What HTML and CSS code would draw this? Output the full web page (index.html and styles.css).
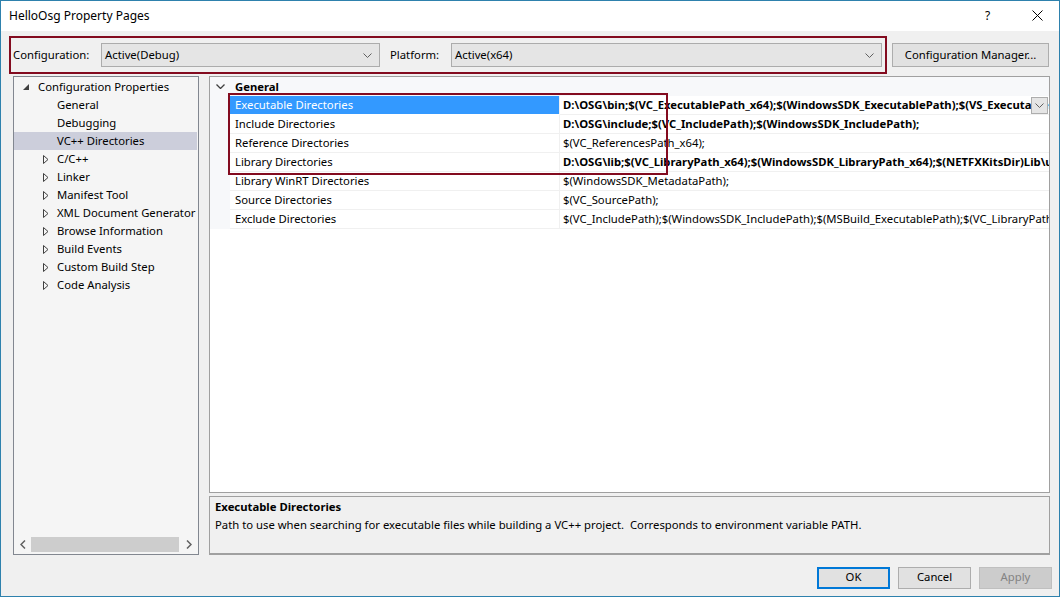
FILE: index.html
```html
<!DOCTYPE html>
<html>
<head>
<meta charset="utf-8">
<link rel="stylesheet" href="styles.css">
</head>
<body>
<div class="window">
  <div class="titlebar">
    <span class="title">HelloOsg Property Pages</span>
    <span class="tb-help">?</span>
    <span class="tb-close"><svg width="11" height="11" viewBox="0 0 11 11"><path d="M0.5 0.5 L10.5 10.5 M10.5 0.5 L0.5 10.5" stroke="#000" stroke-width="1" fill="none"/></svg></span>
  </div>

  <div class="toolbar">
    <div class="config-box">
      <span class="lbl lbl-config">Configuration:</span>
      <div class="combo combo-config"><span class="combo-text">Active(Debug)</span><svg class="chev" width="9" height="5" viewBox="0 0 9 5"><path d="M0.5 0.5 L4.5 4.5 L8.5 0.5" stroke="#606060" fill="none"/></svg></div>
      <span class="lbl lbl-platform">Platform:</span>
      <div class="combo combo-platform"><span class="combo-text">Active(x64)</span><svg class="chev" width="9" height="5" viewBox="0 0 9 5"><path d="M0.5 0.5 L4.5 4.5 L8.5 0.5" stroke="#606060" fill="none"/></svg></div>
    </div>
    <div class="btn btn-cfgmgr">Configuration Manager...</div>
  </div>

  <div class="main">
    <div class="tree">
      <div class="tree-list">
        <div class="tnode root"><svg class="exp" width="7" height="7" viewBox="0 0 7 7"><path d="M6 0 L6 6 L0 6 Z" fill="#404040"/></svg><span>Configuration Properties</span></div>
        <div class="tnode child"><span>General</span></div>
        <div class="tnode child"><span>Debugging</span></div>
        <div class="tnode child selected"><span>VC++ Directories</span></div>
        <div class="tnode child"><svg class="col" width="6" height="9" viewBox="0 0 6 9"><path d="M0.5 0.5 L5 4.5 L0.5 8.5 Z" fill="none" stroke="#404040"/></svg><span>C/C++</span></div>
        <div class="tnode child"><svg class="col" width="6" height="9" viewBox="0 0 6 9"><path d="M0.5 0.5 L5 4.5 L0.5 8.5 Z" fill="none" stroke="#404040"/></svg><span>Linker</span></div>
        <div class="tnode child"><svg class="col" width="6" height="9" viewBox="0 0 6 9"><path d="M0.5 0.5 L5 4.5 L0.5 8.5 Z" fill="none" stroke="#404040"/></svg><span>Manifest Tool</span></div>
        <div class="tnode child"><svg class="col" width="6" height="9" viewBox="0 0 6 9"><path d="M0.5 0.5 L5 4.5 L0.5 8.5 Z" fill="none" stroke="#404040"/></svg><span>XML Document Generator</span></div>
        <div class="tnode child"><svg class="col" width="6" height="9" viewBox="0 0 6 9"><path d="M0.5 0.5 L5 4.5 L0.5 8.5 Z" fill="none" stroke="#404040"/></svg><span>Browse Information</span></div>
        <div class="tnode child"><svg class="col" width="6" height="9" viewBox="0 0 6 9"><path d="M0.5 0.5 L5 4.5 L0.5 8.5 Z" fill="none" stroke="#404040"/></svg><span>Build Events</span></div>
        <div class="tnode child"><svg class="col" width="6" height="9" viewBox="0 0 6 9"><path d="M0.5 0.5 L5 4.5 L0.5 8.5 Z" fill="none" stroke="#404040"/></svg><span>Custom Build Step</span></div>
        <div class="tnode child"><svg class="col" width="6" height="9" viewBox="0 0 6 9"><path d="M0.5 0.5 L5 4.5 L0.5 8.5 Z" fill="none" stroke="#404040"/></svg><span>Code Analysis</span></div>
      </div>
      <div class="hscroll">
        <span class="sarrow"><svg width="6" height="9" viewBox="0 0 6 9"><path d="M5 0.5 L1 4.5 L5 8.5" stroke="#606060" stroke-width="1.5" fill="none"/></svg></span>
        <span class="thumb"></span>
        <span class="sarrow sarrow-r"><svg width="6" height="9" viewBox="0 0 6 9"><path d="M1 0.5 L5 4.5 L1 8.5" stroke="#606060" stroke-width="1.5" fill="none"/></svg></span>
      </div>
    </div>

    <div class="right">
      <div class="grid">
        <div class="grid-head">
          <svg class="head-chev" width="9" height="5" viewBox="0 0 9 5"><path d="M0.5 0.5 L4.5 4.5 L8.5 0.5" stroke="#404040" stroke-width="1.3" fill="none"/></svg>
          <span class="head-text">General</span>
        </div>
        <div class="row selected">
          <div class="gutter"></div><div class="name">Executable Directories</div>
          <div class="value bold">D:\OSG\bin;$(VC_ExecutablePath_x64);$(WindowsSDK_ExecutablePath);$(VS_ExecutablePath);$(MSBuild_ExecutablePath);$(FxCopDir);$(PATH);</div>
          <div class="cell-drop"><svg width="9" height="5" viewBox="0 0 9 5"><path d="M0.5 0.5 L4.5 4.5 L8.5 0.5" stroke="#606060" fill="none"/></svg></div>
        </div>
        <div class="row">
          <div class="gutter"></div><div class="name">Include Directories</div>
          <div class="value bold">D:\OSG\include;$(VC_IncludePath);$(WindowsSDK_IncludePath);</div>
        </div>
        <div class="row">
          <div class="gutter"></div><div class="name">Reference Directories</div>
          <div class="value">$(VC_ReferencesPath_x64);</div>
        </div>
        <div class="row">
          <div class="gutter"></div><div class="name">Library Directories</div>
          <div class="value bold">D:\OSG\lib;$(VC_LibraryPath_x64);$(WindowsSDK_LibraryPath_x64);$(NETFXKitsDir)Lib\um\x64</div>
        </div>
        <div class="row">
          <div class="gutter"></div><div class="name">Library WinRT Directories</div>
          <div class="value">$(WindowsSDK_MetadataPath);</div>
        </div>
        <div class="row">
          <div class="gutter"></div><div class="name">Source Directories</div>
          <div class="value">$(VC_SourcePath);</div>
        </div>
        <div class="row">
          <div class="gutter"></div><div class="name">Exclude Directories</div>
          <div class="value">$(VC_IncludePath);$(WindowsSDK_IncludePath);$(MSBuild_ExecutablePath);$(VC_LibraryPath_x64);</div>
        </div>
        <div class="redbox"></div>
      </div>
      <div class="desc">
        <div class="desc-title">Executable Directories</div>
        <div class="desc-text">Path to use when searching for executable files while building a VC++ project.&nbsp; Corresponds to environment variable PATH.</div>
      </div>
    </div>
  </div>

  <div class="footer">
    <div class="btn btn-ok">OK</div>
    <div class="btn btn-cancel">Cancel</div>
    <div class="btn btn-apply">Apply</div>
  </div>
</div>
</body>
</html>
```

FILE: styles.css
```css
* { box-sizing: border-box; }
html, body { margin: 0; padding: 0; }
body {
  font-family: "Noto Sans", "Open Sans", sans-serif;
  font-size: 11.3px;
  color: #000;
  background: #f0f0f0;
}
.window {
  width: 1060px;
  height: 597px;
  border: 1px solid #2e81ad;
  background: #f0f0f0;
  display: flex;
  flex-direction: column;
  overflow: hidden;
}
.titlebar {
  height: 30px;
  background: #fff;
  display: flex;
  align-items: center;
  padding-left: 8px;
  padding-bottom: 1px;
  flex: none;
}
.title { font-size: 12px; flex: 1; }
.tb-help { font-size: 12px; width: 12px; margin-right: 35px; }
.tb-close { width: 11px; height: 11px; margin-right: 16px; display: flex; }

.toolbar {
  display: flex;
  padding: 5px 0 0 8px;
  height: 44px;
  flex: none;
}
.config-box {
  width: 878px;
  height: 38px;
  border: 2px solid #830b1f;
  display: flex;
  align-items: center;
  padding-left: 2px;
}
.lbl { white-space: nowrap; padding-bottom: 2px; }
.lbl-config { width: 88px; }
.lbl-platform { width: 61px; margin-left: 10px; }
.combo {
  height: 24px;
  background: #e5e5e5;
  border: 1px solid #acacac;
  display: flex;
  align-items: center;
  padding: 0 7px 0 3px;
}
.combo-text { flex: 1; padding-bottom: 2px; }
.combo-config { width: 279px; }
.combo-platform { width: 431px; }
.chev { flex: none; }
.btn {
  height: 22px;
  background: #e1e1e1;
  border: 1px solid #adadad;
  display: flex;
  align-items: center;
  justify-content: center;
  padding-bottom: 3px;
}
.btn-cfgmgr {
  width: 157px;
  height: 24px;
  margin: 7px 0 0 5px;
  padding-bottom: 2px;
}

.main {
  display: flex;
  padding-left: 12px;
  margin-top: 1px;
  height: 479px;
  flex: none;
}
.tree {
  width: 186px;
  height: 479px;
  border: 1px solid #828790;
  background: #f5f5f5;
  display: flex;
  flex-direction: column;
  padding-top: 1px;
}
.tree-list { flex: 1; }
.tnode {
  height: 18px;
  display: flex;
  align-items: center;
  white-space: nowrap;
  position: relative;
  margin-right: 1px;
}
.tnode span { padding-bottom: 2px; }
.tnode.root { padding-left: 9px; }
.tnode.root .exp { margin-right: 8px; margin-top: 1px; }
.tnode.child { padding-left: 43px; }
.tnode.child .col { position: absolute; left: 29px; top: 5px; }
.tnode.selected { background: #cccedb; }
.hscroll {
  height: 17px;
  display: flex;
  align-items: center;
  margin-bottom: 1px;
}
.sarrow { width: 17px; height: 17px; display: flex; align-items: center; justify-content: center; flex: none; }
.sarrow-r { width: 19px; }
.thumb { flex: 1; height: 15px; background: #cdcdcd; }

.right {
  width: 841px;
  margin-left: 10px;
  display: flex;
  flex-direction: column;
}
.grid {
  height: 417px;
  border: 1px solid #a0a0a0;
  background: #fff;
  position: relative;
  overflow: hidden;
}
.grid-head {
  height: 19px;
  display: flex;
  align-items: center;
  background: #f7f8fa;
}
.head-chev { margin-left: 6px; margin-right: 10px; }
.head-text { font-weight: bold; }
.row {
  height: 19px;
  display: flex;
  position: relative;
}
.gutter { width: 20px; background: #f7f8fa; flex: none; }
.name {
  width: 330px;
  flex: none;
  padding-left: 5px;
  padding-bottom: 1px;
  display: flex;
  align-items: center;
  white-space: nowrap;
  border-right: 1px solid #f0f0f0;
  border-bottom: 1px solid #f0f0f0;
}
.value {
  flex: 1;
  padding-left: 3px;
  padding-bottom: 1px;
  display: flex;
  align-items: center;
  white-space: nowrap;
  overflow: hidden;
  border-bottom: 1px solid #f0f0f0;
}
.value.bold { font-weight: bold; }
.row.selected .name { background: #3399ff; color: #fff; border-bottom-color: #fff; }
.row.selected .value { padding-right: 17px; }
.cell-drop {
  position: absolute;
  right: 1px;
  top: 1px;
  width: 17px;
  height: 17px;
  background: #e5e5e5;
  border: 1px solid #adadad;
  display: flex;
  align-items: center;
  justify-content: center;
}
.redbox {
  position: absolute;
  left: 18px;
  top: 16px;
  width: 440px;
  height: 82px;
  border: 2px solid #830b1f;
  pointer-events: none;
}
.desc {
  margin-top: 3px;
  height: 59px;
  border: 1px solid #a0a0a0;
  border-bottom-width: 2px;
  background: #f0f0f0;
  padding: 1px 0 0 5px;
}
.desc-title { font-weight: bold; height: 18px; line-height: 17px; }
.desc-text { height: 17px; line-height: 17px; }

.footer {
  display: flex;
  justify-content: flex-end;
  gap: 8px;
  padding-right: 7px;
  margin-top: 12px;
}
.footer .btn { width: 73px; }
.btn-ok { border: 2px solid #0078d7; }
.btn-apply { background: #cccccc; border-color: #bfbfbf; color: #838383; }
```
